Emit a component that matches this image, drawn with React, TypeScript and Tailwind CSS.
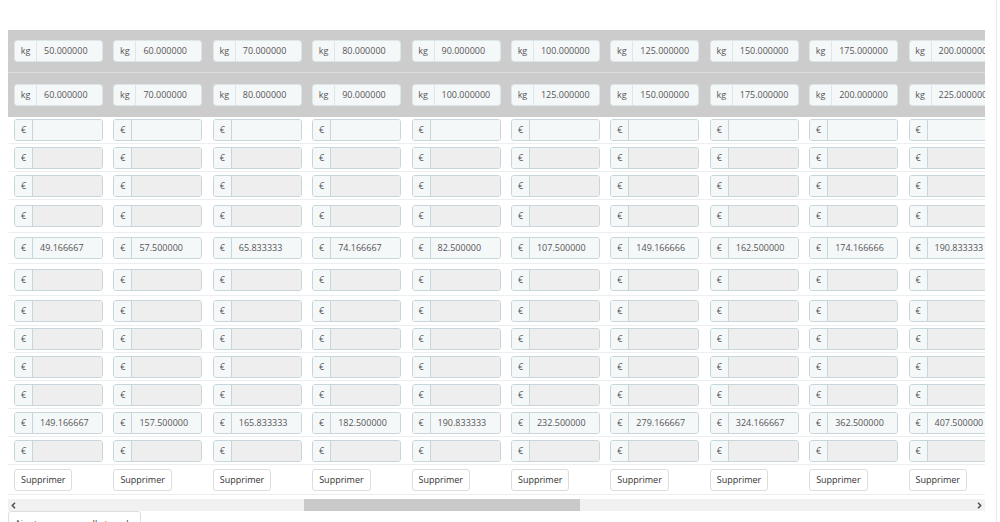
const kgFrom = ["50.000000", "60.000000", "70.000000", "80.000000", "90.000000", "100.000000", "125.000000", "150.000000", "175.000000", "200.000000"];
const kgTo = ["60.000000", "70.000000", "80.000000", "90.000000", "100.000000", "125.000000", "150.000000", "175.000000", "200.000000", "225.000000"];

const zone5 = ["49.166667", "57.500000", "65.833333", "74.166667", "82.500000", "107.500000", "149.166666", "162.500000", "174.166666", "190.833333"];
const zone11 = ["149.166667", "157.500000", "165.833333", "182.500000", "190.833333", "232.500000", "279.166667", "324.166667", "362.500000", "407.500000"];

type PriceRow = { h: string; disabled: boolean; values?: string[] };

const priceRows: PriceRow[] = [
  { h: "h-[27px]", disabled: false },
  { h: "h-[28px]", disabled: true },
  { h: "h-[28px]", disabled: true },
  { h: "h-[33px]", disabled: true },
  { h: "h-[31px]", disabled: false, values: zone5 },
  { h: "h-[32px]", disabled: true },
  { h: "h-[30px]", disabled: true },
  { h: "h-[27px]", disabled: true },
  { h: "h-[28px]", disabled: true },
  { h: "h-[28px]", disabled: true },
  { h: "h-[28px]", disabled: false, values: zone11 },
  { h: "h-[28px]", disabled: true },
];

const cols = Array.from({ length: 10 }, (_, i) => i);

function InputGroup({ unit, value, disabled, light }: { unit: string; value?: string; disabled?: boolean; light?: boolean }) {
  return (
    <div className={`flex h-[22px] w-[89px] shrink-0 overflow-hidden rounded-[3px] border ${light ? "border-[#dde6e9]" : "border-[#c7d6db]"}`}>
      <div className={`flex items-center justify-center border-r bg-[#f5f8f9] ${light ? "border-[#dde6e9]" : "border-[#c7d6db]"} ${unit === "kg" ? "w-[22px]" : "w-[18px]"}`}>
        {unit}
      </div>
      <div className={`flex flex-1 items-center whitespace-nowrap pl-[7px] ${disabled ? "bg-[#eeeeee]" : "bg-[#f5f8f9]"}`}>
        {value}
      </div>
    </div>
  );
}

function Chevron({ dir }: { dir: "left" | "right" }) {
  return (
    <svg width="5" height="7" viewBox="0 0 5 7" className="shrink-0">
      <path
        d={dir === "left" ? "M4 0.8 L1.3 3.5 L4 6.2" : "M1 0.8 L3.7 3.5 L1 6.2"}
        fill="none"
        stroke="#505050"
        strokeWidth="1.5"
      />
    </svg>
  );
}

export default function App() {
  return (
    <div className="h-[522px] w-[1000px] overflow-hidden bg-white font-['Open_Sans',sans-serif] text-[9px] text-[#555]">
      <div className="h-full w-[997px] border-r border-[#e8e8e8] pl-[8px] pt-[30px]">

        {/* Ranges table */}
        <div className="w-[977px] overflow-hidden">
          <div className="w-max">

            {/* Weight ranges */}
            <div className="flex h-[43px] items-center border-b border-[#dedede] bg-[#cccccc]">
              {cols.map((i) => (
                <div key={i} className="w-[99.4px] shrink-0 pl-[6px]">
                  <InputGroup unit="kg" value={kgFrom[i]} light />
                </div>
              ))}
            </div>
            <div className="flex h-[44px] items-center bg-[#cccccc]">
              {cols.map((i) => (
                <div key={i} className="w-[99.4px] shrink-0 pl-[6px]">
                  <InputGroup unit="kg" value={kgTo[i]} light />
                </div>
              ))}
            </div>

            {/* Prices per zone */}
            {priceRows.map((row, r) => (
              <div key={r} className={`flex items-center border-b border-[#eceff1] ${row.h}`}>
                {cols.map((i) => (
                  <div key={i} className="w-[99.4px] shrink-0 pl-[6px]">
                    <InputGroup unit="€" value={row.values ? row.values[i] : ""} disabled={row.disabled} />
                  </div>
                ))}
              </div>
            ))}

            {/* Delete buttons */}
            <div className="flex h-[30px] items-center border-b border-[#eceff1]">
              {cols.map((i) => (
                <div key={i} className="w-[99.4px] shrink-0 pl-[6px]">
                  <button className="h-[22px] rounded-[3px] border border-[#dddddd] bg-white px-[6px] text-[#333]">
                    Supprimer
                  </button>
                </div>
              ))}
            </div>

          </div>
        </div>

        {/* Scrollbar */}
        <div className="mt-[4px] flex h-[12px] w-[977px] items-center bg-[#f1f1f1]">
          <div className="flex w-[296px] items-center pl-[3px]">
            <Chevron dir="left" />
          </div>
          <div className="h-full w-[276px] bg-[#c9c9c9]"></div>
          <div className="flex flex-1 items-center justify-end pr-[3px]">
            <Chevron dir="right" />
          </div>
        </div>

        <button className="h-[28px] w-[133px] overflow-hidden whitespace-nowrap rounded-t-[3px] border border-[#dddddd] bg-white pl-[6px] pb-[9px] pt-[5px] text-left text-[#333]">
          Ajouter une nouvelle tranche
        </button>
      </div>
    </div>
  );
}
